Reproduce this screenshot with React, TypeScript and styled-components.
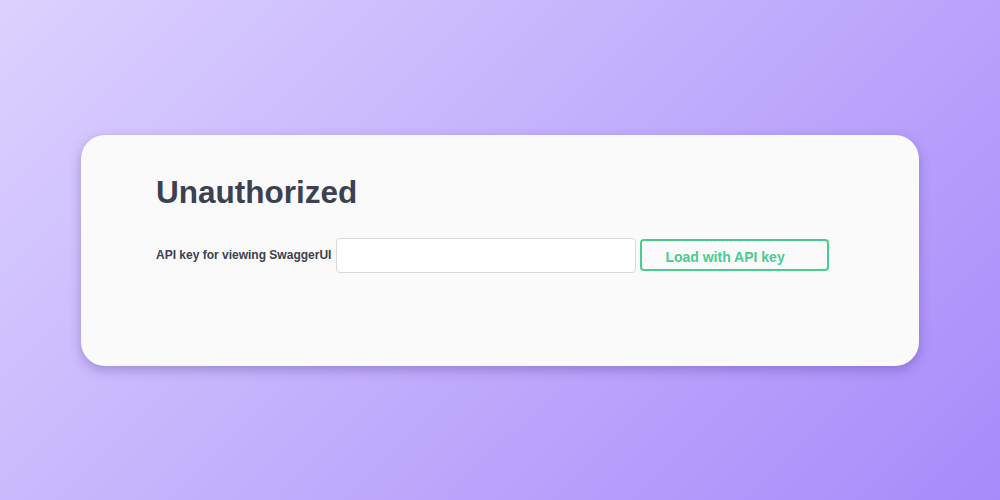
import React, { useState } from 'react';
import styled, { createGlobalStyle } from 'styled-components';

const GlobalStyle = createGlobalStyle`
  html, body {
    margin: 0;
    padding: 0;
  }
  body {
    font-family: "Liberation Sans", Arial, sans-serif;
  }
`;

const Page = styled.div`
  min-height: 100vh;
  display: flex;
  align-items: center;
  background: linear-gradient(135deg, #dcd1fe 0%, #a78bfa 100%);
  padding: 0 81px;
  box-sizing: border-box;
`;

const Card = styled.div`
  flex: 1;
  background: #fafafa;
  border-radius: 24px;
  box-shadow: 0 4px 12px rgba(60, 30, 120, 0.3);
  padding: 38px 75px 93px;
`;

const Title = styled.h2`
  margin: 0 0 27px;
  font-size: 31.5px;
  line-height: 38px;
  font-weight: 700;
  color: #3b4151;
`;

const Row = styled.form`
  display: flex;
  align-items: center;
`;

const Label = styled.label`
  font-size: 12px;
  font-weight: 700;
  color: #3b4151;
  margin-right: 5px;
`;

const KeyInput = styled.input`
  width: 300px;
  height: 35px;
  box-sizing: border-box;
  border: 1px solid #d9d9d9;
  border-radius: 4px;
  background: #fff;
  padding: 8px 10px;
  font-family: inherit;
  font-size: 14px;
  margin-right: 4px;
  outline: none;
`;

const LoadButton = styled.button`
  width: 189px;
  height: 32px;
  box-sizing: border-box;
  border: 2px solid #49cc90;
  border-radius: 4px;
  background: transparent;
  color: #49cc90;
  font-family: inherit;
  font-size: 14px;
  font-weight: 700;
  text-align: left;
  padding: 7px 23px 3px;
  cursor: pointer;
`;

const App = (): JSX.Element => {
  const [apiKey, setApiKey] = useState('');

  return (
    <>
      <GlobalStyle />
      <Page>
        <Card>
          <Title>Unauthorized</Title>
          <Row onSubmit={(e) => e.preventDefault()}>
            <Label htmlFor="api-key">API key for viewing SwaggerUI</Label>
            <KeyInput
              id="api-key"
              type="text"
              value={apiKey}
              onChange={(e) => setApiKey(e.target.value)}
            />
            <LoadButton type="submit">Load with API key</LoadButton>
          </Row>
        </Card>
      </Page>
    </>
  );
};

export default App;
